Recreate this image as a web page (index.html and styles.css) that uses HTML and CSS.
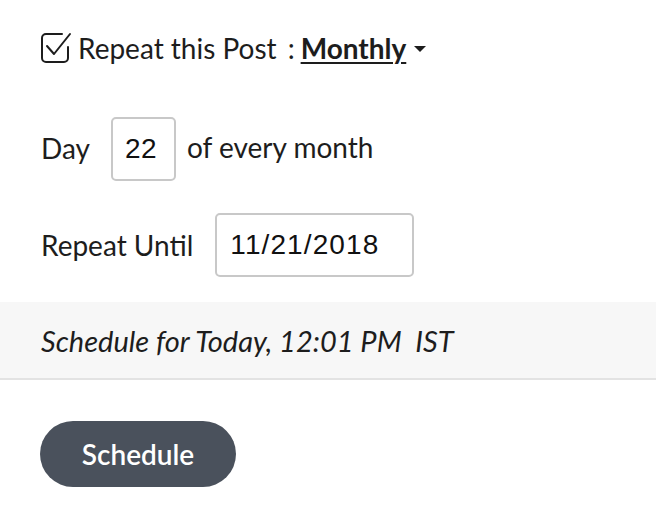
FILE: index.html
```html
<!DOCTYPE html>
<html>
<head>
<meta charset="utf-8">
<link rel="stylesheet" href="styles.css">
</head>
<body>
<div class="panel">
  <div class="form">
    <div class="row repeat">
      <svg class="check-icon" viewBox="0 0 32 32" width="32" height="32" aria-hidden="true">
        <path d="M22 2 H6 A4 4 0 0 0 2 6 V26 A4 4 0 0 0 6 30 H24 A4 4 0 0 0 28 26 V15" fill="none" stroke="#1d1d1d" stroke-width="2" stroke-linecap="round" stroke-linejoin="round"/>
        <path d="M7 14 L14 22 L30 2" fill="none" stroke="#1d1d1d" stroke-width="2" stroke-linecap="round" stroke-linejoin="round"/>
      </svg>
      <span class="label">Repeat this Post</span>
      <span class="colon">:</span>
      <span class="freq">Monthly</span>
      <span class="caret"></span>
    </div>
    <div class="row day">
      <span class="label day-label">Day</span>
      <div class="box day-box">22</div>
      <span class="label after">of every month</span>
    </div>
    <div class="row until">
      <span class="label">Repeat Until</span>
      <div class="box date-box">11/21/2018</div>
    </div>
  </div>
  <div class="band">
    <span class="when">Schedule for Today, 12:01 PM&nbsp; IST</span>
  </div>
  <div class="actions">
    <button class="btn">Schedule</button>
  </div>
</div>
</body>
</html>
```

FILE: styles.css
```css
html, body {
  margin: 0;
  padding: 0;
  background: #ffffff;
}
body {
  font-family: "Lato", "Open Sans", sans-serif;
  color: #1d1d1d;
  font-size: 28px;
}
.form {
  padding: 32px 0 0 41px;
}
.row {
  display: flex;
  align-items: center;
}
.repeat {
  height: 32px;
}
.check-icon {
  display: block;
  margin-left: -1px;
  margin-right: 6px;
}
.label {
  font-size: 28px;
  line-height: 32px;
}
.colon {
  margin-left: 11px;
  margin-right: 6px;
}
.freq {
  font-weight: 700;
  text-decoration: underline;
  text-underline-offset: 3px;
  text-decoration-thickness: 2px;
}
.caret {
  width: 0;
  height: 0;
  border-left: 6px solid transparent;
  border-right: 6px solid transparent;
  border-top: 6px solid #1d1d1d;
  margin-left: 8px;
  margin-top: 2px;
}
.day {
  margin-top: 53px;
  height: 64px;
}
.day-label {
  margin-bottom: 2px;
}
.box {
  box-sizing: border-box;
  border: 2px solid #c8c8c8;
  border-radius: 5px;
  height: 64px;
  display: flex;
  align-items: center;
  font-family: "Liberation Sans", Arial, sans-serif;
  font-size: 28px;
  letter-spacing: 0.5px;
  color: #111;
}
.day-box {
  width: 65px;
  margin-left: 21px;
  padding-left: 12px;
}
.after {
  margin-left: 11px;
  margin-bottom: 5px;
}
.until {
  margin-top: 32px;
  height: 64px;
}
.date-box {
  width: 199px;
  margin-left: 22px;
  padding-left: 13px;
  letter-spacing: 1.1px;
}
.band {
  margin-top: 25px;
  height: 76px;
  background: #f7f7f7;
  border-bottom: 2px solid #e3e3e3;
  display: flex;
  align-items: center;
  padding-left: 41px;
}
.when {
  font-style: italic;
  font-size: 29px;
}
.actions {
  padding: 41px 0 0 40px;
}
.btn {
  width: 196px;
  height: 66px;
  border: none;
  border-radius: 33px;
  background: #4a515c;
  color: #ffffff;
  font-family: "Lato", sans-serif;
  font-size: 28px;
  font-weight: 600;
  padding: 0;
  cursor: pointer;
}
```
